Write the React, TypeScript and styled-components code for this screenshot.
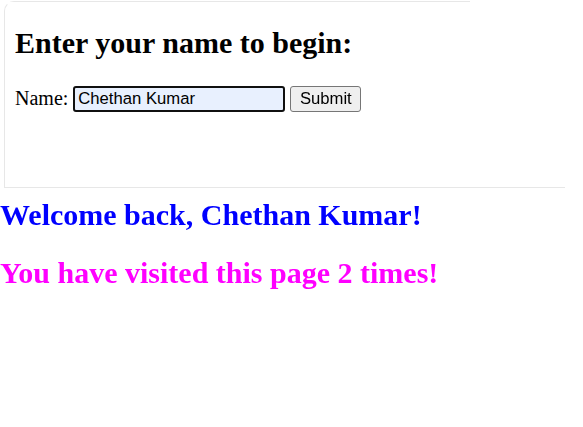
import React, { useState } from "react";
import styled, { createGlobalStyle } from "styled-components";

const GlobalStyle = createGlobalStyle`
  body {
    margin: 0;
    background: #fff;
    font-family: "Liberation Serif", "Times New Roman", serif;
    font-size: 20px;
    color: #000;
  }
`;

const Page = styled.div`
  width: 583px;
`;

const Card = styled.section`
  width: 561px;
  box-sizing: border-box;
  margin: 1px 0 0 4px;
  padding: 0 10px 75px;
  border: 1px solid #e7e7e7;
  border-top-color: transparent;
  border-right: none;
  border-top-left-radius: 10px;
  background-image: linear-gradient(#e7e7e7, #e7e7e7);
  background-origin: border-box;
  background-size: 466px 1px;
  background-repeat: no-repeat;
  background-position: top left;
`;

const Title = styled.h2`
  margin: 24px 0 25px;
  font-size: 30px;
  font-weight: bold;
  line-height: 34.5px;
`;

const Row = styled.form`
  display: flex;
  align-items: center;
  gap: 5px;
  margin: 0;
`;

const Label = styled.label`
  font-size: 20px;
`;

const NameInput = styled.input`
  box-sizing: border-box;
  width: 212px;
  height: 26px;
  padding: 1px 3px;
  border: 2px solid #101010;
  border-radius: 3px;
  outline: none;
  background: #e8f0fe;
  font-family: "Liberation Sans", Arial, sans-serif;
  font-size: 16.67px;
  color: #000;
`;

const Button = styled.button`
  box-sizing: border-box;
  width: 71px;
  height: 26px;
  padding: 0 8px;
  border: 1px solid #767676;
  border-radius: 3px;
  background: #efefef;
  font-family: "Liberation Sans", Arial, sans-serif;
  font-size: 16.67px;
  color: #000;
`;

const Message = styled.h2<{ $color: string; $top?: string }>`
  margin: ${(p) => p.$top ?? "24px"} 0 24px;
  font-size: 30px;
  font-weight: bold;
  line-height: 34.5px;
  color: ${(p) => p.$color};
`;

export default function App() {
  const [name, setName] = useState("Chethan Kumar");
  const visits = 2;

  return (
    <Page>
      <GlobalStyle />
      <Card>
        <Title>Enter your name to begin:</Title>
        <Row onSubmit={(e) => e.preventDefault()}>
          <Label htmlFor="name">Name:</Label>
          <NameInput
            id="name"
            value={name}
            autoFocus
            onChange={(e) => setName(e.target.value)}
          />
          <Button type="submit">Submit</Button>
        </Row>
      </Card>
      <Message $color="#0000ff" $top="10px">
        Welcome back, {name}!
      </Message>
      <Message $color="#ff00ff">You have visited this page {visits} times!</Message>
    </Page>
  );
}
